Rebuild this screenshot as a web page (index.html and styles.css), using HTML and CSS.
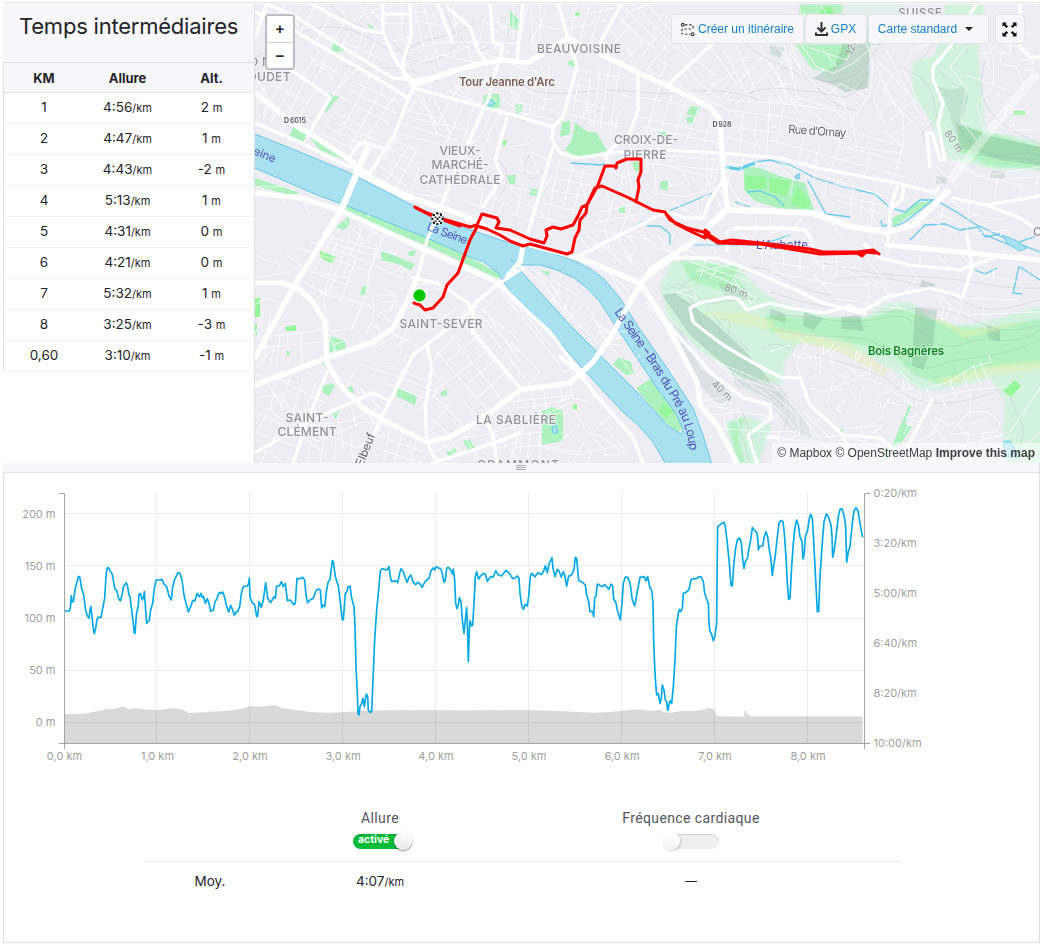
FILE: index.html
```html
<!DOCTYPE html>
<html lang="fr">
<head>
<meta charset="utf-8">
<title>Temps intermédiaires</title>
<link rel="stylesheet" href="styles.css">
</head>
<body>
<main class="activity">
  <section class="top">
    <aside class="splits">
      <h2 class="splits-title">Temps intermédiaires</h2>
      <table class="splits-table">
        <thead><tr><th>KM</th><th>Allure</th><th>Alt.</th></tr></thead>
        <tbody>
          <tr><td>1</td><td>4:56<small>/km</small></td><td>2 <small>m</small></td></tr>
          <tr><td>2</td><td>4:47<small>/km</small></td><td>1 <small>m</small></td></tr>
          <tr><td>3</td><td>4:43<small>/km</small></td><td>-2 <small>m</small></td></tr>
          <tr><td>4</td><td>5:13<small>/km</small></td><td>1 <small>m</small></td></tr>
          <tr><td>5</td><td>4:31<small>/km</small></td><td>0 <small>m</small></td></tr>
          <tr><td>6</td><td>4:21<small>/km</small></td><td>0 <small>m</small></td></tr>
          <tr><td>7</td><td>5:32<small>/km</small></td><td>1 <small>m</small></td></tr>
          <tr><td>8</td><td>3:25<small>/km</small></td><td>-3 <small>m</small></td></tr>
          <tr><td>0,60</td><td>3:10<small>/km</small></td><td>-1 <small>m</small></td></tr>
        </tbody>
      </table>
    </aside>
    <div class="map">
      <svg class="map-canvas" viewBox="255 4 785 459" width="785" height="459">
        <rect class="land" x="255" y="4" width="785" height="459"/>
        <!-- hillside woods -->
        <g class="wood-soft">
          <path d="M912 62L935 55L946 4H985L978 50L985 130L1040 142V168L1000 170L950 160L930 120L912 95Z"/>
          <path d="M800 4H905L885 30L868 60L870 85L850 92L835 82L812 70L797 44Z" opacity=".4"/>
          <path d="M660 285L672 262L690 258L740 268L760 290L780 303L830 316L865 318L885 303L912 302L930 318L955 325L985 322L1045 305V468H1010L1003 440L1005 400L990 378L950 388L920 390L890 368L860 352L800 342L785 360L782 385L740 378L700 350L668 318Z"/>
          <path d="M725 422L745 416L772 425L757 468H738Z"/>
        </g>
        <g class="wood">
          <path d="M682 262L740 266L733 276L745 288L720 290L690 280Z"/>
          <path d="M765 315L800 318L870 318L900 308L920 316L955 327L990 328L1045 318V364L985 368L940 384L915 375L890 352L850 343L800 332L770 332Z"/>
          <path d="M795 44H848L852 52L842 64L832 72L812 68Z"/>
          <path d="M800 4H842V14H800Z"/>
          <path d="M958 125L985 132L1045 148V170L990 166L960 152Z"/>
          <path d="M728 424L744 418L738 440L745 463H738Z"/>
        </g>
        <g class="wood-dark">
          <path d="M843 44L870 44L868 88L845 92L833 85L813 78L835 66Z"/>
          <path d="M875 14H905L880 45H855Z" opacity=".7"/>
          <path d="M662 295L675 293L712 320L744 350L765 375L775 388L730 370L690 335Z"/>
          <path d="M725 350L770 382L785 395V408L765 400L735 385Z" opacity=".6"/>
          <path d="M915 308L937 310L933 345L923 370L912 365Z"/>
          <path d="M804 312L823 318L814 330L803 326Z"/><path d="M841 317L860 315L864 331L842 329Z"/>
          <path d="M770 308L785 314L786 323L770 318Z"/>
          <path d="M987 325L1000 330V342L988 338Z"/><path d="M922 280L935 284V290L920 286Z"/>
          <path d="M672 325L682 330L700 368L722 384L732 400L718 404L700 385Z" opacity=".5"/>
          <path d="M955 122L990 136L1045 148V166L1000 160L960 148Z"/>
          <path d="M930 84L950 90L962 87L968 96L962 118L955 135L950 115L944 98Z" opacity=".6"/>
          <path d="M718 282L745 288L750 300L725 296Z" opacity=".5"/>
          <path d="M770 380L780 388L805 420L812 438L792 430L770 405Z" opacity=".45"/>
          <path d="M770 45L785 48L780 58L770 54ZM992 170L1005 172L1004 179L990 177ZM936 176L948 178L945 185L936 183Z" opacity=".7"/>
        </g>
        <g class="sand"><path d="M700 312L745 312L775 322L770 330L730 322ZM770 326L850 343L890 370L883 376L840 352L780 338ZM935 380L990 365L1045 360V368L985 376L945 386ZM925 314L965 330L1030 322L965 338Z"/></g>
        <!-- contour lines -->
        <g class="contour">
          <path d="M255 58C290 35 320 20 350 30S395 60 410 48S450 40 475 22M330 4C350 30 385 30 400 50S440 65 460 40M345 65C370 75 400 60 420 75M520 82C545 105 590 85 640 92S700 80 760 100M730 105C760 80 790 90 815 92S850 110 870 70M740 40C770 65 800 70 820 90S840 105 858 112M790 62C815 90 850 85 865 65S885 35 900 20"/>
          <path d="M905 70C925 75 932 90 936 110S915 125 925 140M940 70C955 95 975 80 965 105S955 125 975 145S1010 148 1040 155M985 60C975 100 985 120 1040 144M920 60C930 50 938 40 945 15M960 150C980 160 1010 152 1040 163"/>
          <path d="M665 290C680 280 695 300 700 320S740 350 760 370S800 390 780 440M672 285C700 280 710 325 750 350M770 292C810 305 835 310 870 312S920 300 960 315S1000 335 1040 325M775 315C810 315 840 325 870 320S905 312 920 330S950 350 970 342S1010 350 1040 330M780 330C820 342 850 330 880 345S915 375 940 365S1000 360 1040 340M835 280C870 270 930 285 960 300S1000 310 1040 300M820 262C860 275 900 275 940 278S1000 290 1040 288"/>
          <path d="M680 290C690 270 720 280 745 270S790 290 830 295M680 300C710 310 740 295 760 300M720 320C730 315 732 325 728 335S715 325 720 320M762 350C770 340 785 345 790 350M1015 385C1000 400 1030 420 1022 440S1010 450 1015 463M735 412C740 430 745 445 750 463M742 410L755 450M815 355C850 365 880 370 900 390S960 405 1000 390"/>
          <path d="M445 5C450 40 480 60 490 45M500 18C512 15 510 35 505 40M545 170C525 190 520 170 530 155M495 160C510 165 510 185 500 195M600 110C570 130 570 150 600 165"/>
        </g>
        <!-- parks -->
        <g class="park">
          <path d="M333 41L347 49L338 52L331 51ZM366 23L374 27L371 29ZM325 111L331 97L328 93L334 96L340 97L335 101L326 113Z"/>
          <path d="M294 126L308 135L302 143L289 137ZM308 135L346 156L352 163L320 150ZM255 178L300 193L290 195L255 186ZM347 204L440 242L505 276L497 278L430 247L345 213Z"/>
          <path d="M336 227L349 216L350 225L343 230Z"/><path d="M484 94H499L501 107L486 110L483 105Z"/>
          <path d="M510 10L519 20L517 30L510 27ZM515 105L522 104V112L516 114ZM568 61L576 61L575 67L568 65ZM565 150L572 140L575 122L586 131L597 133L607 151L588 157L573 155ZM562 122L570 121V134L560 137Z"/>
          <path d="M632 163L640 160V173L635 171ZM660 182L669 180L667 191L660 188ZM618 208L625 205L625 213L620 213ZM659 131L667 131L664 139L658 136ZM687 114L690 106L700 107L696 117ZM686 117H695L692 124L687 122ZM531 188L538 190L537 196L529 195ZM507 175L516 175L515 184L509 184Z"/>
          <path d="M744 166L760 168L780 176L805 183L814 210H785L755 201L744 190Z"/><path d="M892 218L905 212L915 203L932 201L915 213L893 227Z"/>
          <path d="M381 251L388 253L415 264L411 270L395 263L381 260ZM362 287L368 285L366 294L360 295ZM330 336L345 341L346 349L333 351L329 353ZM324 355L332 356L328 364L322 364ZM408 252L416 250L414 256L409 256ZM398 387L417 397L415 405L396 396ZM440 393L447 389L447 396L441 396ZM321 387L331 383L335 386L329 396L323 393ZM346 389L352 386L354 393L349 393ZM332 414L340 410L336 419Z"/>
          <path d="M463 440L470 440L476 450L468 450ZM447 452L456 448L455 455L448 458ZM542 411L552 407L563 411L563 441L542 445ZM613 364L619 357L631 362L634 374L626 375ZM636 388L652 378L665 392L683 428L678 432L662 420ZM527 308L538 318L535 319ZM540 270L550 272L548 276Z"/>
          <path d="M909 405L911 406L905 424L912 427L902 442L890 451ZM838 431L843 428L842 434ZM883 452L888 447L891 455L885 460ZM706 412L711 414L708 417Z"/>
        </g>
        <g class="pitch"><path d="M745 175L766 177V189H746ZM770 178L790 181L786 196L770 192ZM797 186L811 203L805 209L791 204ZM1015 380L1021 386L1011 397L1003 391ZM1014 111H1025V115H1013ZM819 14L824 7L831 8L834 14ZM320 251L336 257L332 264L320 257ZM285 327L296 325V331H286ZM255 298H260V317H255ZM255 324H257V335H255ZM663 403L674 411L666 418L659 411ZM572 405L577 404V410H573ZM502 141L507 140L505 146L503 145ZM287 351H290V356H287ZM575 12L580 13L579 17L575 15Z"/></g>
        <!-- river -->
        <path class="river" fill-rule="evenodd" d="M250 132L300 152L350 173L410 204L460 226L500 240L527 247L550 252L577 262L592 270L604 279L620 298L637 325L667 368L693 408L703 435L713 468H668L653 442L638 425L623 412L582 368L547 328L520 302L510 291L497 272L484 262L470 257L427 238L350 207L317 195L250 166ZM511 260L523 265L540 265L557 270L574 278L587 288L600 302L613 322L633 352L657 388L677 415L683 430L681 434L667 425L637 392L613 368L570 325L527 278Z"/>
        <g class="stream">
          <path d="M571 163L600 165L605 164M725 167L740 170L755 162L770 160L790 165L815 178L845 187L875 194L890 208L905 212L920 200L935 200L955 211L975 224L1000 236L1040 252M747 192L760 191L775 197L784 206M808 181L826 214L850 217M893 227L905 222L932 201M881 220L882 226L890 225M910 240L925 225L945 224L960 230L978 227L985 237L1000 234M647 226H660L670 234V245M610 240L640 223L712 193M735 202L750 207M985 235L1010 245L1040 235M975 270L985 274L997 268M1019 266L1013 293L1022 294M1020 267L1040 280M693 245H760L790 235"/>
          <path d="M725 167L738 169L755 163" stroke-width="3"/>
        </g>
        <g class="pond"><path d="M487 102L490 99L495 103L491 106L487 105ZM1003 441H1010L1020 457H1006ZM552 427L556 425L558 433L553 433ZM1002 235L1015 240L1027 248L1020 251L1008 244ZM795 176L800 173L799 179L795 178Z"/></g>
        <!-- minor streets, by district -->
        <g class="street">
          <g transform="translate(250 0) scale(.33333)">
            <path d="M14 110L60 70L110 10M14 60L90 110M20 90L60 20M120 30L150 90M150 20L130 60M14 230L60 300L40 360M60 220L20 320M100 240L40 340M130 250L60 370M170 230L90 400M200 270L130 370M110 320L190 370M90 350L160 400M60 250L180 310M210 150L150 240M230 170L190 250M180 170L260 215M190 190L230 210L250 240M250 130L230 170M210 100L190 140M270 180L240 240M320 210L250 280M300 200L230 320M360 230L270 400M400 260L300 440M440 280L330 440M240 330L380 400M270 290L420 370M320 250L450 310M300 270L440 340M260 370L400 430M230 380L370 450M210 400L340 460"/>
            <path d="M200 10L150 100M240 40L220 90M270 10L290 60L250 120M330 15L380 90M350 15L400 70M300 90L270 150M340 100L310 180M380 110L350 190M290 130L400 180M310 60L400 20M400 70H475M400 130L480 110M420 170L480 140M410 30L430 10M455 10V110M440 180L480 200M490 30L560 50M485 60L590 80M480 150L600 120M490 10L530 180M520 15L570 200M550 130L660 125L810 130M560 160L680 190M500 190L690 130M610 20L620 110M640 60L590 90M650 130L670 200M690 120L700 60M700 60L760 110M740 60L760 90L780 60M750 80H800M770 50V110M790 20V110M700 160L810 200M730 140L780 160"/>
            <path d="M490 270L560 370M500 300L470 340M520 290L560 400M550 290L600 400M470 350L650 390M450 370L620 420M440 400L600 440M460 330L560 350M600 300L560 380M640 310L590 430M670 320L640 420M430 420L520 460M410 440L500 490M400 460L470 520M380 490L470 560M440 410L400 480M480 430L410 540M500 450L440 560M510 500L480 580M480 580L560 590M530 570L600 600M600 540L700 570M620 510L740 560M640 470L720 500M690 360L650 450M720 340L700 400L640 450M740 350L690 470M640 600L690 620M590 620L680 660M700 560L690 620M740 560L720 650M750 540L810 590M760 610L720 690M760 300L810 330M700 280L740 300M750 310V350M740 250L810 290M610 250L680 320M640 220L610 290M680 200L650 300M590 270L690 310M710 210L700 260"/>
            <path d="M14 560H100M20 565V575M40 565V575M60 565V575M100 600L110 620M160 610L180 640M280 660L340 720M310 650L390 690M330 640V700M350 680L400 720M360 640L320 720M400 680L350 720M30 640L14 660"/>
          </g>
          <g transform="translate(510 0) scale(.33333)">
            <path d="M50 20L20 180M0 130L40 140M40 60L150 90M60 10L70 150M90 10V140M110 30L60 130M150 60L330 20M160 90L290 60M200 10L180 110M240 10L210 120M280 10L240 130M330 50L400 130M300 90L370 170M340 20L480 160M370 10L500 150M410 10L540 160M460 40L520 110M330 60L440 150M400 130L330 190M440 110L370 200M480 120L410 210M370 60L300 150M350 40L420 10M270 120L310 160M440 170L410 210L450 230L470 190ZM500 140L560 190M520 190L560 240M560 180L620 230M600 140L680 250M640 150L720 300M680 140L750 300M700 200L600 260M760 170L640 290M790 200L680 310M560 240L640 310M510 260L700 350M650 330L810 350M640 300L810 310M660 380L810 400M650 410L760 440M700 340L690 460M740 350L730 450M780 290L770 460M620 250L580 290M660 190L720 170M750 140L780 200"/>
            <path d="M0 250L60 230L110 270M20 200L100 220M40 190L20 300M80 210L60 330M0 300L150 340M0 330L130 360M120 200L100 330M30 260L110 300L150 290M0 270L50 360M180 250L270 270L360 290M170 290L300 330M160 340L330 380M210 220L190 330M240 230L230 340M270 210L250 380M300 190L270 380M330 190L300 400M200 210L380 240M380 290L440 300L540 320M385 350L600 400M400 230L560 290M450 250L410 400M490 270L440 430M530 300L480 440M570 310L520 450M400 380L630 430M380 400L480 440M610 330L580 440M220 320V350L240 360V320ZM330 330L310 400"/>
            <path d="M30 470L60 455L120 480M30 470L40 510L100 530M60 455L100 560M0 440L60 430M0 560L90 580L120 540M0 600L70 620L100 640M0 640L60 660M40 550L20 640M130 500L270 530M120 530L260 560M110 570L250 590M100 610L230 640M90 650L200 680M150 480L130 560L110 690M190 490L160 620M220 510L180 680M230 600L210 540M290 510L340 530L400 520M340 510L330 580M350 480L370 600M290 550L300 640M260 640L380 610M250 670L400 640M320 570L280 700M370 600L330 700M250 690L420 720M400 520L440 490L520 510L590 530L600 570L520 590L440 580L410 600M430 500L440 580M470 530L480 560L520 550M520 510L540 560M560 600L570 650M390 450L420 480L400 520M450 460L440 490M500 440L480 490M400 460L640 480M400 490L630 510M590 460V530M610 480L600 560"/>
            <path d="M630 460L610 560L640 650M645 460L660 560L700 620M655 500L650 600M620 560L680 620M480 650L590 660M490 610L560 650M610 570L570 600M650 690H810M650 690V720M660 680L720 720M740 650L730 720M780 650V720M680 500L700 480L810 500M700 470L690 520M740 470V500M640 480L700 500"/>
          </g>
          <g transform="translate(770 0) scale(.33333)">
            <path d="M90 130L140 200L190 220L250 190L320 130M100 40L130 130M150 10L180 60M60 30L120 70M110 140L230 180L250 140M160 150L200 200M0 60L60 120L100 240M20 140L60 180L80 290L230 340M40 130L70 240M0 190L50 280L90 340M60 160L130 250L190 290L240 340L260 440M0 230L40 310L190 330L240 370L260 390M70 150L20 210L50 290L20 420M0 300L100 310M60 290L170 370L230 400M0 340L130 370L250 450M0 380L100 400L240 410M180 260L230 320M170 290L210 250L290 290M30 260L90 240M0 270L50 250M290 130L310 190L300 280L240 370M320 200L350 270L400 350L400 440L360 560M350 150L400 250L450 340L480 380M340 280L440 380M320 180L380 240L440 310M340 280L370 220M350 320L400 290M360 360L420 310M370 400L450 350M330 240L310 300L350 380M340 390L400 440M400 200L430 150L480 130M400 210L420 250L470 360M250 440L400 460M260 400L400 440M220 440L300 460L400 490M300 450L290 520M210 430L180 520M100 420L80 490M120 460L100 500M150 430L130 500M200 480L260 470M0 420L400 530"/>
            <path d="M590 140L540 200L590 270L570 360L620 420M590 225L710 270M670 160V260L620 310L640 390L700 400M640 140L660 210M700 150L690 190L740 200L760 250L790 230M630 160H660V130M680 160H720V130M740 60V130M750 180H790V210H760M720 340H790M720 340V390H800M730 350V380M700 130L790 150M780 100L720 120M680 280L720 310L700 350M530 440L570 480M540 470L580 520M560 480L620 530L810 500M570 500L660 540L810 530M600 560L590 720M680 540L670 610M490 520L520 560M500 500L560 560M760 560L740 600M800 540V590M690 540L760 560M530 590L580 630M560 590L590 620M500 640L550 660M520 620L500 700M600 640L680 660L750 640M610 700L720 690"/>
            <path d="M170 540L160 600M190 550L260 570M250 560L240 640M280 580L270 650M180 580L310 610L360 620M320 570L300 640L330 690M200 600L330 640M140 480L130 550M40 510L70 540L60 590M0 470L100 520M100 510L350 590M370 570V630M400 560L390 600M440 570L430 540M310 630L300 690L340 680M0 700L80 680L130 690M100 650L40 720M180 660L220 720M420 660L470 700M400 690L480 660L560 700"/>
          </g>
          <g transform="translate(250 235) scale(.33333)">
            <path d="M14 60L90 90M14 130L120 110M110 60L180 110L300 130M150 40L240 70L360 110M180 20L300 60L460 130M230 20L400 70M260 20L220 200L240 290M300 0L240 160L200 190M340 10L290 150L270 200M380 30L340 200L300 290M210 120L290 150M190 160L360 210M160 140L230 180L380 220M240 290L310 280L340 200M300 70L280 120M240 20L190 110M220 0L330 30L440 60M360 100L350 170M370 180L370 260L350 290M380 180H430L440 210L380 240M390 200L430 200M360 290L380 270L400 320L370 340L350 320M390 230L420 260M400 160L440 180L420 230M450 90L480 120M330 0L300 60M400 0L360 110"/>
            <path d="M14 210L50 190L110 210M40 230L14 300M60 240L40 380M14 340L220 320M14 310L180 290L220 280M90 300L80 400M110 290L120 390M155 290V390M60 260L40 330L70 340L60 390M14 400L60 350M240 300L260 360M250 330L310 310M410 290L480 320M430 300L500 330M460 310L450 360M470 290L440 340M330 390L430 420L560 470M240 410L330 460L410 540M320 400L280 470M400 390L440 400L530 440M400 440L520 490M460 400L440 450M530 330L620 250L680 200M560 350L680 490L740 550M600 300L760 500M640 270L780 440M590 380L690 300M620 420L720 340M650 450L740 370M680 490L780 400M560 360L620 300M550 470L620 420M550 480L660 590M530 540L600 600M560 470L500 530M600 500L540 590M640 500L700 560M620 470L540 410M580 340L540 390"/>
            <path d="M500 150L560 140M530 160L500 190M540 190L580 200M600 170L560 160M560 230L640 280M480 210L530 240L560 260L620 220M690 180L720 210M680 210L810 320M690 240L800 350M720 200L740 180M700 220L810 380M690 260L810 410M740 160L810 240"/>
            <path d="M14 420L130 440M100 440L220 500L170 560M40 430L100 520M80 430L60 520L100 560M120 430L90 520M14 490L80 480L160 560M14 530L120 580M60 520L14 600M160 430L130 530M200 440L160 540M100 560L60 640M170 570L200 620L340 560L420 570M180 570L290 560L380 520M170 570L320 640L400 600M40 640L100 685M50 650L30 685M150 600L230 660M190 600L170 685M230 530L220 600M260 520L280 640M300 500L320 580M220 620L210 685M260 610L250 685M300 600L310 685M14 590L150 640M350 530L380 580M400 570L380 600L520 650M420 580L400 685M460 590L430 685M500 610L480 685M380 640L520 685M550 650L640 610L680 600M560 640L610 680M580 630L630 670M600 620L650 660M620 620L680 580M640 600L690 680M700 600L810 570M740 640L810 620M680 640L740 600L810 680M740 580L780 560L810 600"/>
          </g>
          <g transform="translate(510 235) scale(.33333)">
            <path d="M20 0L100 30M200 0L250 50M230 0L300 50L340 90M290 0L300 60M320 0L370 90M360 10L380 40L350 80M340 60L380 80M400 0L440 40L490 50M440 0L480 40M490 0L480 40M380 100L410 80L420 120M500 20L560 60M240 80L360 140M270 90L360 170M300 120L350 200M60 100L120 140L180 240L280 340M30 95L90 140L170 240M120 130L200 180L250 240L290 330M80 110L140 200M150 160L120 200M180 180L160 230M200 190L180 240M220 210L170 260M250 250L200 280M260 290H350M270 310H340M280 325L330 330M260 270L340 310M300 330L370 420M370 380L390 360M410 200L430 230M400 210L450 250M190 400L300 520L370 600M180 380L250 440M160 410L190 400L230 450M150 360L200 400M180 460L190 490L240 500M270 560L340 640M260 580L300 540M250 610L290 650M280 660H330"/>
            <path d="M0 180L120 330M0 200L150 390M0 320L90 410L50 460M0 370L60 450M0 430L40 460M30 460L20 520L100 510L180 490M60 460L80 530M100 455L110 530M150 455L160 500M0 500L190 480M0 560L100 540L170 510M30 580L0 685M60 590L50 685M90 600V685M10 600L100 590M0 640L90 630L200 650M40 540L30 660M110 640L200 660L330 630M180 500L230 590L280 610L350 660M210 570L150 620M220 620L190 680M250 640L230 685M120 540L180 530M550 30H700L800 60M520 60L600 80L720 120M530 20V60M600 0L620 60M680 0L700 60M750 30L760 90M540 80L720 140M590 60L570 130M630 90L600 130M560 100L680 150M560 110L660 90M670 130L720 200M660 140L740 190L700 220M500 170L560 190L550 160L500 170M610 370L700 460L810 510M620 380L760 440L810 460M610 370L650 400L800 500M660 420L810 470M570 500L670 480L640 510L580 490M590 510L800 550M600 540L700 530M640 540L650 580M680 550L690 590M620 580L770 590"/>
          </g>
          <g transform="translate(770 235) scale(.33333)">
            <path d="M0 60L40 30H130L140 90L260 100M0 80L120 100M40 30V100M90 40V110M140 80H220M160 50V110M200 60V120M120 60L160 100M0 110L200 150L300 150M130 120L190 180M260 100L320 140L360 180M220 100L330 160M300 160L290 220M190 190L410 225M350 190L400 225M400 180L440 130L410 90M450 50V90M500 60L540 100M560 40L600 90M500 180L520 220L510 250L530 250L540 210L510 180M530 170L580 200L560 260M540 220L600 240L810 230M590 190L740 195M640 210V240M670 100V140M600 110L740 140M700 50V70M740 60V75M280 60L370 170M320 30L300 0M380 0L350 60"/>
            <path d="M90 310L110 330L80 380L90 420M80 340L70 360L90 370M90 370L150 365L190 380M130 330L140 390M160 330V360M190 330L160 360M210 335L180 355L190 390M150 370V420M190 380L240 400L260 420M260 345L250 410M275 360L255 380M305 380L300 410M340 385L320 430M300 410L260 430L190 460M260 420L340 450L430 510L480 495M200 420L240 430M190 440L170 500M150 410L120 430M120 460L160 470L220 460M240 460L260 500M230 490L200 520L220 540M280 450L260 520M330 500L340 550M310 510L330 520M360 490L340 520M320 480L360 470M390 510L350 500M340 540L290 580M380 400L410 430L420 460M400 430V460M430 460L380 470M440 480V510M450 450V500M470 460L480 490M470 460L540 440L600 400L660 380M480 490L600 465L700 455M540 430L550 470M580 410L590 460M610 390L630 450M640 400L660 450M655 360L665 385M630 380L640 400M600 470V530M560 470L550 500M510 480L530 520M630 490L620 500M650 530L690 560L680 590L590 600L560 570L600 530L650 530M650 550L600 570M540 600L600 590M490 545L540 570M520 540L480 600M560 560L510 580M600 600L580 650M640 600L630 640M440 530L400 600M460 540L430 600M400 540L440 560M380 620L430 640M480 560L530 620M500 590L440 620M230 580L340 570L300 600M270 560L290 640M310 580L330 630M210 610L230 680M240 640L300 640M220 600L340 640L380 685"/>
            <path d="M0 350L60 330M0 440L60 500L150 610M0 470L80 540L90 600L30 620L0 600M0 500L60 560L80 590L0 590M100 530L180 610M150 610L220 600M0 610L150 620L230 680M560 640L620 620L720 590M720 590L810 460M760 640L810 590M580 630L700 600M640 680L720 600"/>
          </g>
        </g>
        <path class="rail" d="M1037 73L950 180"/>
        <path class="rail-dash" d="M1037 73L950 180"/>
        <!-- main roads -->
        <g class="road">
          <path d="M265 3L293 15L327 37L360 58L393 78L413 80L440 77M255 12L293 30L333 53L383 82L408 98M255 37L267 3M310 3L337 18L363 30L383 33L397 63L413 83M383 3V33M383 14H410M410 3L411 37L403 60L404 75L413 84M438 5L453 42M447 7L470 27L478 50L486 62M490 3L493 42L503 46L500 57L490 90M413 88L450 98L483 107L520 117L553 127M413 88L393 137L370 173M350 157L357 146L360 143L367 143L382 148M280 59L287 67L330 97L307 137M490 95L457 167L427 240L417 278M507 118L495 160L502 177L483 207M255 123L300 142L340 163L367 172M568 38L558 3M523 3L517 60M622 3L600 43M568 38L577 67L563 117L553 127M553 147L527 237M638 72L638 110L630 133L607 153V163M713 43L670 83"/>
          <path d="M553 127L552 140L560 153L577 158L610 153L660 150L720 153L780 158L813 167L897 183L935 193L938 188M953 198L987 205L1040 196M987 205L1020 218L1040 232M888 240L890 210L897 187M890 210L903 198V186M1020 3V47L1030 57H1040M663 210L685 218L703 218L710 200L723 180M663 213L610 240L577 257M727 207L703 230M735 228H780L805 230L812 240M727 232V250"/>
          <path d="M413 278L437 283L467 302L473 312V332L520 388M523 268L497 285L477 302L470 312L413 355L393 395L378 425L363 463M427 345L432 368L425 408L427 442L437 463M327 372L307 422L293 463M255 453L307 422L373 393L388 400M432 463L497 442L520 433M483 415L493 435L497 463M510 295L550 332L577 368L593 392L633 438L643 463M560 357L582 375"/>
          <path d="M663 318L710 372L743 398L770 405L771 418L748 435L757 463M640 283L673 258H717L750 270L803 293L820 302L860 313L887 297L930 288L963 297L972 268L967 235"/>
          <path d="M780 377L757 365L723 345L693 322L690 308L700 303L730 297L738 299L747 310L770 303L790 308L823 313L850 306L865 313M780 377L800 378L810 405L843 435L880 438L895 450M932 400L907 448M767 437H780M843 435L850 455M865 245L880 258L910 265L960 270L993 258"/>
          <path d="M977 3L950 47L933 67V80L943 103L938 123L945 160L940 160L932 133L927 133L930 167M717 425L700 405"/>
        </g>
        <g class="avenue">
          <path d="M255 93L293 123L350 160L370 177L410 197L457 213L484 225L510 240"/>
          <path d="M413 85L450 72L483 63L503 60L527 63L568 38L597 52L637 72L670 87L710 107L720 120L722 153L724 180L727 207"/>
          <path d="M367 147L340 213L293 288L255 358M255 193L300 198L340 210L430 252L497 282L520 305M255 283H283L300 290L313 302L325 322L327 362L340 385L363 408L393 425L427 442L450 437L483 418L520 390L570 383L593 362L610 338L640 285L653 268L693 242L727 210"/>
          <path d="M255 385L327 358L373 342L393 328L407 302L417 278M523 246L520 262L508 276M510 240L577 257L640 283L663 318L697 382L700 405L717 425L737 463"/>
          <path d="M887 245L970 253L1040 260"/>
        </g>
        <path class="motorway" d="M727 210L770 211L813 213L853 227L887 232L913 225L947 192M367 150L340 213L325 236M363 175L410 199"/>
        <!-- place names -->
        <g class="label-area">
          <text x="579" y="53" textLength="84">BEAUVOISINE</text>
          <text x="460" y="155" textLength="41">VIEUX-</text><text x="460" y="169" textLength="57">MARCHÉ-</text><text x="460" y="184" textLength="81">CATHÉDRALE</text>
          <text x="646" y="144" textLength="64">CROIX-DE-</text><text x="645" y="159" textLength="43">PIERRE</text>
          <text x="441" y="328" textLength="83">SAINT-SEVER</text>
          <text x="307" y="422" textLength="43">SAINT-</text><text x="307" y="436" textLength="59">CLÉMENT</text>
          <text x="516" y="424" textLength="80">LA SABLIÈRE</text><text x="518" y="469" textLength="82">GRAMMONT</text>
          <text x="920" y="17" textLength="44">SUISSE</text>
          <text x="260" y="66" textLength="22">ON</text><text x="269" y="81" textLength="43">OUDET</text>
          <text x="1037.500" y="236">C</text>
        </g>
        <text class="label-poi" x="507" y="86" textLength="96">Tour Jeanne d'Arc</text>
        <text class="label-wood" x="906" y="355" textLength="76">Bois Bagnères</text>
        <text class="label-ref" x="295" y="123" textLength="22">D 6015</text>
        <text class="label-ref" x="722" y="127" textLength="19">D 928</text>
        <text class="label-road" transform="translate(817 135) rotate(4)" textLength="58">Rue d'Ornay</text>
        <text class="label-road" transform="translate(369 451) rotate(-68)">Elbeuf</text>
        <g class="label-height"><text transform="translate(735 294) rotate(20)">80 m</text><text transform="translate(720 393) rotate(43)">40 m</text><text transform="translate(951 143) rotate(55)">80 m</text><text transform="translate(855 48) rotate(-68)">120</text></g>
        <g class="label-water">
          <text transform="translate(260 157) rotate(22)">Seine</text>
          <text transform="translate(446 237) rotate(20)" textLength="42">La Seine</text>
          <text x="782" y="249" textLength="52">L'Aubette</text>
          <path id="arm" d="M614 312C630 335 650 362 665 388C680 412 690 428 691 470" fill="none" stroke="none"/>
          <text class="along"><textPath href="#arm" textLength="160">La Seine – Bras du Pré au Loup</textPath></text>
        </g>
        <!-- recorded track -->
        <path class="track" d="M415 207L427 213L443 219L460 224L470 227L477 225L482 214L497 218L499 222L496 228L510 230L530 239L544 243L547 236L546 230L553 227L561 229L573 225L578 216L582 207L587 205L598 185L605 166L614 166L616 168L617 163L627 159H641V172L638 180L639 187L636 202M477 226L487 229L500 235L510 241L523 246L530 244L567 254L572 252L575 238L579 230L580 220L586 213L587 205L595 188L602 186L627 197L635 201L653 210L665 212L670 220L687 228L703 232L711 236L720 242L732 240L770 244L810 249L823 252L857 252L873 250L879 254M477 227L470 240L458 273L447 285L443 297L433 308L425 310L420 305L414 303"/>
        <path class="track" d="M416 208L430 215L460 226M667 215L676 224L690 231L705 238L709 233L705 230M705 235L718 243L760 244L820 254L865 253L862 256L857 253M865 252L875 253"/>
        <circle cx="419.500" cy="295.500" r="6.800" class="start"/>
        <g class="finish"><circle cx="437.500" cy="218.500" r="6.500" fill="#fff"/>
          <path d="M433 214h2v2h-2zM436.500 212.500h2v2h-2zM440 214h2v2h-2zM434.500 216.500h2v1.600h-2zM438.500 216.500h2v1.600h-2zM431.500 218h2v2h-2zM436.500 218h2v2h-2zM441.500 218h2v2h-2zM434.500 220.500h2v1.600h-2zM438.500 220.500h2v1.600h-2zM433 222h2v2h-2zM436.500 223h2v2h-2zM440 222h2v2h-2z"/>
          <circle cx="437.500" cy="218.500" r="5.600"/>
        </g>
      </svg>
      <div class="zoom-control"><button>+</button><button>−</button></div>
      <div class="map-tools">
        <button class="tool tool-route"><svg width="15" height="15" viewBox="0 0 16 16" class="icon-line"><circle cx="3" cy="3" r="1.500"/><circle cx="13.500" cy="13" r="1.500"/><path d="M5.500 3h6.500q2 0 2 2t-2 2.500H4q-2.500 0-2.500 2.500T4 13h7" stroke-dasharray="2.500 1.800"/></svg><span>Créer un itinéraire</span></button>
        <button class="tool tool-gpx"><svg width="13" height="16" viewBox="0 0 13 16" class="icon-line"><path d="M6.500 1v9M2.500 6.500l4 4 4-4M1 11.500V14h11v-2.500" stroke-width="2"/></svg><span>GPX</span></button>
        <button class="tool tool-style"><span>Carte standard</span><i class="caret"></i></button>
        <button class="tool tool-full"><svg width="15" height="15" viewBox="0 0 16 16"><path d="M.5.5H5L3.800 2 6.500 4.700 4.700 6.500 2 3.800.5 5ZM15.500.5V5L14 3.800 11.300 6.500 9.500 4.700 12.200 2 11 .5ZM.5 15.500V11L2 12.200 4.700 9.500 6.500 11.300 3.800 14 5 15.500ZM15.500 15.500H11L12.200 14 9.500 11.300 11.300 9.500 14 12.200 15.500 11Z" fill="#111"/></svg></button>
      </div>
      <div class="credits">© Mapbox © OpenStreetMap <b>Improve this map</b></div>
    </div>
  </section>
  <div class="resizer"><i class="grip"></i></div>
  <section class="chart-panel">
    <svg class="chart" viewBox="4 480 940 290" width="940" height="290">
      <path class="grid" d="M156.500 493V743M249.500 493V743M342.500 493V743M435.500 493V743M528.500 493V743M621.500 493V743M714.500 493V743M807.500 493V743M65 513.500H864M65 565.500H864M65 618.500H864M65 670.500H864M65 722.500H864"/>
      <path class="altitude" transform="translate(0 480) scale(.33333)" d="M195 790V701L240 702 270 698 295 693 320 687 345 686 365 680 375 682 390 688 405 685 430 688 470 690 520 685 545 688 565 699 610 697 625 697 628 689 632 695 690 692 730 685 750 678 780 680 800 677 828 676 845 684 880 689 940 697 990 698 1047 695 1130 691 1270 690 1390 691 1590 690 1690 694 1780 698 1820 697 1860 693 1915 688 1955 692 1985 690 1988 696 2010 698 2045 693 2090 693 2128 684 2142 688 2150 706 2160 709 2232 710 2234 690 2238 692 2242 705 2246 700 2252 709 2588 709V790Z"/>
      <path class="axis" d="M59 493.500H64.500V749M59 743.500H870M870 493.500H864.500V749"/>
      <g class="pace">
        <path transform="translate(0 480) scale(.33333)" d="M195 393 208 393 211 385 214 347 216 365 220 365 226 325 230 310 235 290 239 290 245 325 251 345 256 385 261 405 267 415 270 390 273 380 277 420 280 445 283 461 287 445 290 425 293 412 303 412 309 380 314 355 318 290 321 265 325 262 330 272 337 283 344 325 351 333 355 353 361 363 366 345 371 318 379 308 383 320 387 345 390 350 395 390 400 430 403 460 405 460 409 405 412 390 415 375 417 343 421 340 427 360 431 350 433 335 437 390 440 430 448 420 452 390 458 370 463 325 468 300 480 300 486 298 492 312 500 320 507 348 514 360 518 320 524 298 534 278 540 280 546 300 552 345 558 370 565 396 572 380 578 362 585 362 591 340 598 350 603 340 606 352 610 348 616 370 622 356 627 370 632 394 640 390 645 365 650 358 657 338 665 340 668 336 674 352 680 380 686 396 692 376 698 390 703 406 709 395 713 395 719 380 725 335 730 320 742 318 746 310 748 294 750 350 755 365 764 375 770 410 773 408 777 365 784 382 790 360 797 308 803 355 812 368 822 350 826 355 830 318 838 318 844 305 850 320 856 310 862 362 870 360 882 374 886 370 891 295 898 297 908 292 914 300 918 345 923 368 930 360 940 355 948 332 955 327 961 330 965 384 968 375 974 380 980 330 984 308 990 298 997 242 1000 245 1006 290 1015 318 1019 350 1027 420 1030 418 1036 340 1041 335 1044 320 1047 322"/>
        <path transform="translate(330 480) scale(.33333)" d="M57 322 60 318 65 355 72 380 75 440 78 560 82 640 84 700 87 705 90 680 95 670 99 655 103 680 106 660 109 642 113 650 115 690 120 697 125 695 129 600 134 480 140 390 146 330 151 272 156 266 170 270 177 260 181 290 185 305 196 302 203 308 209 280 213 266 220 275 225 290 231 307 238 290 243 285 250 308 257 314 263 307 270 312 276 322 285 305 297 295 303 272 310 264 314 270 319 260 325 264 332 266 337 280 342 307 346 300 350 265 355 262 362 270 367 282 370 267 374 300 377 370 381 386 385 375 388 353 393 365 397 420 402 460 406 420 410 383 412 430 415 545 418 450 420 422 425 438 428 436 432 370 436 290 440 275 446 297 452 288 460 280 466 282 472 304 482 290 490 291 497 272 505 285 515 288 528 271 538 280 548 296 556 293 562 288 567 295 570 340 575 375 580 388 586 373 592 378 596 350 601 290 605 280 615 290 624 278 633 284 640 276 646 257 652 278 657 252 666 233 669 265 675 290 682 268 688 275 694 292 700 275 704 285 710 318 716 288 724 286 732 268 736 232 740 235 746 302 755 305 766 315 770 345 776 365 780 395 788 395 791 410 794 355 798 348 802 312 817 320 824 314 837 328 843 312 848 318 851 358 858 368 862 390 871 420 876 370 880 310 886 291 893 292 900 308 907 360 914 378 920 345 930 292 943 290 948 303 953 290 959 320 966 335 969 370 971 480 974 560 977 610 980 645 985 640 990 670 994 655 997 615 1002 630 1006 660 1010 665 1013 692"/>
        <path transform="translate(640 480) scale(.33333)" d="M83 692 90 662 95 670 100 620 105 540 109 440 115 400 118 388 122 395 127 385 130 340 140 336 147 328 153 300 160 295 168 297 177 290 184 291 190 305 194 340 200 357 205 370 207 430 210 455 214 460 220 482 224 470 230 430 231 300 233 140 242 133 252 127 256 140 262 190 268 250 273 316 277 318 281 260 286 210 292 180 299 174 304 190 308 235 312 266 316 245 322 235 328 200 332 180 337 143 343 150 350 158 354 180 355 210 358 200 368 198 373 170 378 155 383 170 388 210 392 230 397 286 401 255 405 235 411 180 417 130 423 121 429 125 433 160 438 230 442 310 446 358 450 355 455 260 460 190 465 140 470 120 475 135 480 170 486 185 489 237 493 220 496 170 503 150 508 115 512 103 517 115 521 180 526 280 532 395 536 395 540 290 546 200 552 125 559 102 565 110 573 135 576 170 578 232 582 215 588 170 595 110 600 88 606 86 613 110 617 140 620 247 625 215 630 200 637 130 642 92 648 83 654 92 660 130 668 172"/>
      </g>
      <g class="tick tick-left"><text x="55.500" y="517.500">200 m</text><text x="55.500" y="569.500">150 m</text><text x="55.500" y="621.500">100 m</text><text x="55.500" y="673.500">50 m</text><text x="55.500" y="725.500">0 m</text></g>
      <g class="tick tick-bottom"><text x="64.500" y="760">0,0 km</text><text x="157.500" y="760">1,0 km</text><text x="250" y="760">2,0 km</text><text x="343" y="760">3,0 km</text><text x="436" y="760">4,0 km</text><text x="529" y="760">5,0 km</text><text x="622" y="760">6,0 km</text><text x="715" y="760">7,0 km</text><text x="808" y="760">8,0 km</text></g>
      <g class="tick tick-right"><text x="873.500" y="497">0:20/km</text><text x="873.500" y="547">3:20/km</text><text x="873.500" y="597">5:00/km</text><text x="873.500" y="647">6:40/km</text><text x="873.500" y="697">8:20/km</text><text x="873.500" y="747">10:00/km</text></g>
    </svg>
    <div class="stats">
      <div class="stats-row stats-head">
        <div></div>
        <div><span class="stat-name">Allure</span><span class="toggle on"><em>activé</em><i class="knob"></i></span></div>
        <div><span class="stat-name">Fréquence cardiaque</span><span class="toggle"><i class="knob"></i></span></div>
      </div>
      <div class="stats-row stats-values"><div>Moy.</div><div>4:07<small>/km</small></div><div class="none">—</div></div>
    </div>
  </section>
</main>
</body>
</html>
```
FILE: styles.css
```css
* { box-sizing: border-box; }
body { margin: 0; padding: 2px 0 0 3px; background: #fff; color: #242428; font-family: Inter, Roboto, sans-serif; font-size: 14px; }
button { margin: 0; padding: 0; border: 0; font: inherit; }
.activity { width: 1037px; height: 941px; border: 1px solid #dfdfe8; border-left: 0; }
.top { display: flex; height: 460px; padding-top: 1px; }
.splits { width: 252px; flex: none; border-right: 1px solid #dfdfe8; background: linear-gradient(#f7f7fa 89px, #fff 89px); }
.splits-title { margin: 0; height: 59px; padding: 7px 0 0 16px; border-bottom: 1px solid #dfdfe8; font-size: 22px; line-height: 30px; font-weight: 400; letter-spacing: -.22px; white-space: nowrap; }
.splits-table { width: 250px; border-spacing: 0; border-left: 1px solid #dfdfe8; table-layout: fixed; text-align: center; }
.splits-table th, .splits-table td { padding: 0 1px 0 0; }
.splits-table th { height: 30px; border-bottom: 1px solid #dfdfe8; font-size: 13px; font-weight: 700; }
.splits-table td { height: 31px; border-bottom: 1px solid #f0f0f5; font-size: 13.5px; padding-bottom: 2px; }
.splits-table th:nth-child(2) { width: 86px; }
.splits-table th:first-child { width: 81px; }
small { font-size: 11px; }
.map { position: relative; width: 785px; height: 459px; margin-right: -1px; overflow: hidden; }
.map-canvas { display: block; }
.land { fill: #eeedf4; }
.wood-soft { fill: #cdf3da; opacity: .85; filter: blur(1.5px); }
.wood { fill: #b3f1c2; filter: blur(1px); }
.wood-dark { fill: #6d9e83; opacity: .27; filter: blur(.6px); }
.sand { fill: #e4efb5; opacity: .5; filter: blur(1px); }
.contour { fill: none; stroke: #9c9c9c; stroke-opacity: .25; stroke-width: .8; }
.park { fill: #adf2be; }
.pitch { fill: #97f59c; }
.river { fill: #a9e1f1; stroke: #6bc6e4; stroke-width: 1; }
.stream { fill: none; stroke: #66cbea; stroke-width: 1.3; }
.pond { fill: #a9e1f1; stroke: #66cbea; }
.street { fill: none; stroke: #fff; stroke-width: 3.2; stroke-linejoin: round; opacity: .68; }
.road, .avenue, .motorway { fill: none; stroke: #fff; stroke-linecap: round; stroke-linejoin: round; }
.road { stroke-width: 3.2; }
.avenue { stroke-width: 5.2; }
.motorway { stroke-width: 6.2; }
.rail { fill: none; stroke: #fff; stroke-opacity: .35; stroke-width: 9; }
.rail-dash { fill: none; stroke: #fff; stroke-opacity: .4; stroke-width: 9; stroke-dasharray: 1 2; }
.map-canvas text { font-family: Inter, sans-serif; text-anchor: middle; paint-order: stroke; stroke: #f5f4f8; stroke-width: 2px; stroke-linejoin: round; }
.label-area { fill: #919198; font-size: 12px; font-weight: 500; }
.label-poi { fill: #7b6254; font-size: 11.5px; font-weight: 600; }
.label-wood { fill: #148126; font-size: 11.5px; font-weight: 600; }
.map-canvas .label-wood { stroke: #c4f4cf; }
.label-ref { fill: #62626e; font-size: 7px; font-weight: 700; }
.label-road { fill: #63636b; font-size: 11.5px; }
.label-height { fill: #8e9694; font-size: 10px; }
.map-canvas .label-height text { stroke-opacity: .3; }
.label-water { fill: #5255b5; font-size: 11.5px; }
.map-canvas .label-water text { stroke: none; }
.map-canvas .label-water .along { text-anchor: start; font-size: 12.5px; }
.track { fill: none; stroke: #f00; stroke-width: 3; stroke-linejoin: round; stroke-linecap: round; }
.start { fill: #00c800; stroke: #fff; stroke-width: 1.3; }
.finish path { fill: #222; }
.finish circle:last-child { fill: none; stroke: #222; stroke-width: 1.2; stroke-dasharray: 2 2; }
.zoom-control { position: absolute; left: 10px; top: 10px; width: 30px; height: 56px; border: 2px solid #bdbdc3; border-radius: 4px; display: flex; flex-direction: column; overflow: hidden; background: #fff; }
.zoom-control button { height: 26px; background: #fff; color: #222; font: bold 15px/26px "Liberation Sans", sans-serif; }
.zoom-control button + button { border-top: 1px solid #ccc; line-height: 24px; }
.map-tools { position: absolute; top: 10px; right: 15px; display: flex; gap: 1px; font: 12px "Liberation Sans", sans-serif; }
.tool { display: flex; align-items: center; justify-content: center; height: 30px; border: 1px solid #e3e3ea; border-radius: 4px; background: #f7f7fa; color: #127fbf; gap: 3px; }
.tool-route { width: 133px; padding-right: 1px; }
.tool-gpx { width: 62px; padding-right: 1px; }
.tool-style { width: 121px; gap: 8px; padding-right: 6px; }
.tool-full { width: 30px; margin-left: 5px; padding-right: 1px; }
.icon-line { fill: none; stroke: #333; stroke-width: 1.2; }
.caret { border: 4px solid transparent; border-top-color: #222; border-bottom: 0; }
.credits { position: absolute; right: 0; bottom: 0; height: 20px; padding: 0 5px; background: rgba(255,255,255,.5); color: #404040; font: 12px/20px "Liberation Sans", sans-serif; white-space: nowrap; }
.resizer { height: 10px; background: #f7f7fa; border-bottom: 1px solid #dfdfe8; display: flex; justify-content: center; align-items: center; }
.grip { width: 10px; height: 5px; border: solid #aaa; border-width: 1px 0; background: linear-gradient(#aaa, #aaa) 0 1px / 100% 1px no-repeat; }
.chart-panel { height: 469px; border-left: 1px solid #dfdfe8; padding-top: 7px; }
.chart { display: block; }
.grid, .axis, .pace { fill: none; }
.grid { stroke: #ececec; }
.axis { stroke: #a5a5a5; }
.altitude { fill: #000; fill-opacity: .15; }
.pace { stroke: #04a8e3; stroke-width: 5; stroke-linejoin: round; }
.tick { fill: #a0a0a0; font-size: 11px; }
.tick-left { text-anchor: end; }
.tick-bottom { text-anchor: middle; }
.stats { width: 756px; margin: 35px 0 0 140px; text-align: center; }
.stats-row { display: grid; grid-template-columns: 132px 208px 414px; }
.stats-row > div { display: flex; flex-direction: column; align-items: center; }
.stats-head { height: 57px; border-bottom: 1px solid #efefef; }
.stat-name { color: #54545c; font: 14px/26px Roboto, sans-serif; letter-spacing: .38px; }
.stats-values { font-size: 13.5px; line-height: 38px; }
.stats-row.stats-values > div { display: block; }
.none { font-size: 12px; }
.toggle { position: relative; width: 55px; height: 15px; margin-top: 3px; border-radius: 8px; background: #efefef; box-shadow: inset 0 1px 1px rgba(0,0,0,.12); }
.toggle.on { background: #05bc3a; width: 55px; margin-left: 1px; }
.toggle em { position: absolute; left: 5px; top: -2px; color: #fff; font: bold 10.500px/15px Inter, sans-serif; }
.knob { position: absolute; left: -2px; top: -2px; width: 18px; height: 18px; border-radius: 50%; background: linear-gradient(#fff, #f4f4f4); box-shadow: 1px 1px 2px rgba(0,0,0,.2); }
.toggle.on .knob { left: auto; right: -4px; background: linear-gradient(#fff, #e8e8e8); box-shadow: 0 1px 2px rgba(0,0,0,.5); }
```
